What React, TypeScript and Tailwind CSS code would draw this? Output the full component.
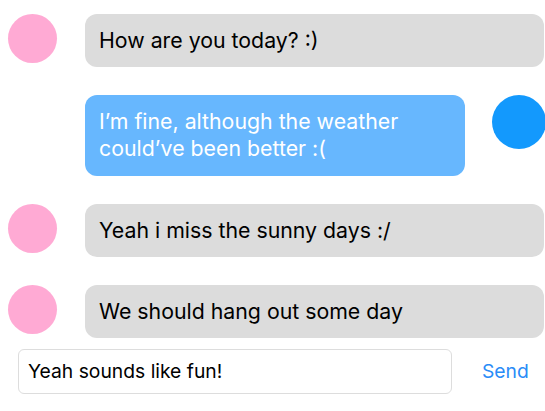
import React from "react";

const font = { fontFamily: "Inter, 'Noto Sans', sans-serif" };

function Pink() {
  return <div className="h-[49px] w-[49px] shrink-0 rounded-full bg-[#ffaad4]" />;
}

function GrayRow({ text }: { text: string }) {
  return (
    <div className="flex items-start gap-[28px] pl-[8px] pr-[1px]">
      <Pink />
      <div className="flex-1 rounded-[12px] bg-[#dcdcdc] px-[14px] py-[13px] text-[21.3px] leading-[27px] text-black">
        {text}
      </div>
    </div>
  );
}

export default function App() {
  return (
    <div className="h-[411px] w-[545px] overflow-hidden bg-white" style={font}>
      <div className="flex flex-col gap-[28px] pt-[14px]">
        <GrayRow text="How are you today? :)" />
        <div className="flex items-start gap-[27px] pl-[85px]">
          <div className="flex-1 rounded-[12px] bg-[#67b7fe] px-[14px] pt-[13px] pb-[14px] text-[21.3px] leading-[27px] text-white">
            I’m fine, although the weather
            <br />
            could’ve been better :(
          </div>
          <div className="-mr-[1px] h-[54px] w-[54px] shrink-0 rounded-full bg-[#1399fd]" />
        </div>
        <GrayRow text="Yeah i miss the sunny days :/" />
        <GrayRow text="We should hang out some day" />
      </div>
      <div className="mt-[11px] flex items-center pl-[18px]">
        <div className="flex h-[45px] w-[434px] items-center rounded-[6px] border border-[#dddddd] px-[9px] text-[19.3px] text-black">
          Yeah sounds like fun!
        </div>
        <div className="ml-[30px] text-[19.3px] text-[#2a8cf7]">Send</div>
      </div>
    </div>
  );
}
